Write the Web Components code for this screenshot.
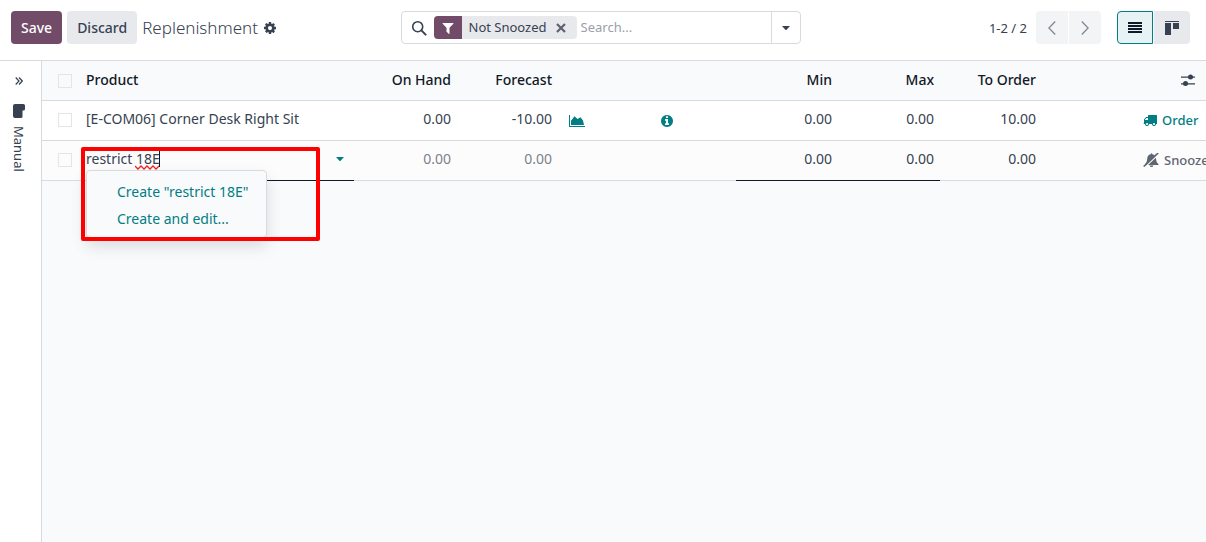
<!DOCTYPE html>
<html lang="en">
<head>
<meta charset="utf-8">
<title>Replenishment</title>
<style>
  html, body { margin: 0; height: 100%; }
  body {
    --brand: #714b67; --teal: #017e84; --line: #d8dadd; --soft: #e7e9ed;
    --ink: #374151; --strong: #111827; --muted: #7c818c; --page: #f9fafb;
    font: 14px/20px "Noto Sans", "Open Sans", sans-serif;
    color: var(--ink); background: var(--page); overflow: hidden;
  }
</style>
</head>
<body>
<replenishment-app></replenishment-app>
<script>
const define = (name, html, setup) => {
  const tpl = document.createElement('template');
  tpl.innerHTML = '<style>*{box-sizing:border-box}button{font:inherit;color:inherit;border:0;background:none;padding:0;margin:0;display:flex;align-items:center;justify-content:center;white-space:nowrap}input{font:inherit;color:inherit}</style>' + html;
  customElements.define(name, class extends HTMLElement {
    constructor() {
      super();
      this.attachShadow({ mode: 'open' }).append(tpl.content.cloneNode(true));
    }
    connectedCallback() { if (setup) setup(this, this.shadowRoot); }
  });
};

const ICONS = {
  cog: [1792, 1792, '<path d="M1152 896q0-106-75-181t-181-75-181 75-75 181 75 181 181 75 181-75 75-181zm512-109v222q0 12-8 23t-20 13l-185 28q-19 54-39 91 35 50 107 138 10 12 10 25t-9 23q-27 37-99 108t-94 71q-12 0-26-9l-138-108q-44 23-91 38-16 136-29 186-7 28-36 28h-222q-14 0-24.5-8.5t-11.5-21.5l-28-184q-49-16-90-37l-141 107q-10 9-25 9-14 0-25-11-126-114-165-168-7-10-7-23 0-12 8-23 15-21 51-66.5t54-70.5q-27-50-41-99l-183-27q-13-2-21-12.5t-8-23.5v-222q0-12 8-23t19-13l186-28q14-46 39-92-40-57-107-138-10-12-10-24 0-10 9-23 26-36 98.5-107.5t94.5-71.5q13 0 26 10l138 107q44-23 91-38 16-136 29-186 7-28 36-28h222q14 0 24.5 8.5t11.5 21.5l28 184q49 16 90 37l142-107q9-9 24-9 13 0 25 10 129 119 165 170 7 8 7 22 0 12-8 23-15 21-51 66.5t-54 70.5q26 50 41 98l183 28q13 2 21 12.5t8 23.5z"/>'],
  filter: [1792, 1792, '<path d="M1595 295q17 41-14 70l-493 493v742q0 42-39 59-13 5-25 5-27 0-45-19l-256-256q-19-19-19-45v-486l-493-493q-31-29-14-70 17-39 59-39h1280q42 0 59 39z"/>'],
  info: [1792, 1792, '<path d="M1152 1376v-160q0-14-9-23t-23-9h-96v-512q0-14-9-23t-23-9h-320q-14 0-23 9t-9 23v160q0 14 9 23t23 9h96v320h-96q-14 0-23 9t-9 23v160q0 14 9 23t23 9h448q14 0 23-9t9-23zm-128-896v-160q0-14-9-23t-23-9h-192q-14 0-23 9t-9 23v160q0 14 9 23t23 9h192q14 0 23-9t9-23zm640 416q0 209-103 385.5t-279.5 279.5-385.5 103-385.5-103-279.5-279.5-103-385.5 103-385.5 279.5-279.5 385.5-103 385.5 103 279.5 279.5 103 385.5z"/>'],
  truck: [1792, 1792, '<path d="M640 1408q0-52-38-90t-90-38-90 38-38 90 38 90 90 38 90-38 38-90zm-384-512h384v-256h-158q-13 0-22 9l-195 195q-9 9-9 22v30zm1280 512q0-52-38-90t-90-38-90 38-38 90 38 90 90 38 90-38 38-90zm256-1088v1024q0 15-4 26.5t-13.5 18.5-16.5 11.5-23.5 6-22.5 2-25.5 0-22.5-.5q0 106-75 181t-181 75-181-75-75-181h-384q0 106-75 181t-181 75-181-75-75-181h-64q-3 0-22.5.5t-25.5 0-22.5-2-23.5-6-16.5-11.5-13.5-18.5-4-26.5q0-26 19-45t45-19v-320q0-8-.5-35t0-38 2.5-34.5 6.5-37 14-30.5 22.5-30l198-198q19-19 50.5-32t58.5-13h160v-192q0-26 19-45t45-19h1024q26 0 45 19t19 45z"/>'],
  search: [16, 16, '<circle cx="6.7" cy="6.7" r="5" fill="none" stroke="currentColor" stroke-width="1.6"/><path d="M10.4 10.4l4.2 4.2" stroke="currentColor" stroke-width="2" stroke-linecap="round"/>'],
  close: [10, 10, '<path d="M1 1l8 8M9 1L1 9" stroke="currentColor" stroke-width="2.2"/>'],
  caret: [8, 4, '<path d="M0 0h8L4.6 3.7q-.6.5-1.2 0z"/>'],
  prev: [8, 14, '<path d="M7.2.6L.9 7l6.3 6.4" fill="none" stroke="currentColor" stroke-width="1.4"/>'],
  next: [8, 14, '<path d="M.8.6L7.1 7 .8 13.4" fill="none" stroke="currentColor" stroke-width="1.4"/>'],
  list: [14, 12, '<path d="M0 0h14v2H0zM0 3h14v2H0zM0 6h14v2H0zM0 9h14v2H0z"/>'],
  kanban: [14, 14, '<path d="M0 0h14v1H0zM0 2h6v12H0zM8 2h6v6H8z"/>'],
  sliders: [14, 12, '<path d="M0 2.5h14v1.200H0zM0 9.300h14v1.200H0z"/><circle cx="9.500" cy="3" r="2.500"/><circle cx="4.500" cy="9.500" r="2.500"/>'],
  expand: [8, 8, '<path d="M.7.5L4 4 .7 7.5M4 .5L7.3 4 4 7.5" fill="none" stroke="currentColor" stroke-width="1.2"/>'],
  folder: [12, 14, '<path d="M2 0h8.400q1.600 0 1.600 1.600V5q0 1.500-1.600 1.500H9.500v5.900q0 1.600-1.600 1.600H2q-2 0-2-2V2q0-2 2-2z"/>'],
  chart: [16, 12, '<path d="M0 0h1v11h15v1H0z"/><path d="M2 10V5.800L5.500 1.300 8.500 4l3-1.700L14 5.500l1 4.500z"/>'],
  bell: [16, 14, '<path d="M8.500.3q.8 0 .8 1 3.700.7 3.700 4.700 0 3.500 2.500 5.200v.8H2v-.8Q4.200 9.500 4.200 6q0-4 3.500-4.700 0-1 .8-1zM6.500 12.500h4q-.4 1.500-2 1.500t-2-1.500z"/><path d="M15.700 1L2 14" stroke="#fcfcfc" stroke-width="1.400"/><path d="M15.200 0L.7 13.500" stroke="currentColor" stroke-width="1.700"/>']
};
define('ui-icon', '<style>:host{display:inline-flex;flex:none}svg{display:block;fill:currentColor}</style>', (el, root) => {
  const [w, h, body] = ICONS[el.getAttribute('name')];
  const width = el.getAttribute('size') || w;
  const height = el.getAttribute('size') || h;
  root.innerHTML += `<svg width="${width}" height="${height}" viewBox="0 0 ${w} ${h}" aria-hidden="true">${body}</svg>`;
});

define('ui-button', `
<style>
  :host{display:inline-flex}
  button{height:33px;padding:0 10px;border-radius:4px;background:var(--soft);font-weight:500}
  :host([primary]) button{background:var(--brand);color:#fff}
</style>
<button type="button"><slot></slot></button>`);

define('search-bar', `
<style>
  :host{display:flex;height:33px;border:1px solid var(--line);border-radius:4px;background:#fff}
  .box{flex:1;min-width:0;display:flex;align-items:center;padding-left:9px}
  .facet{display:flex;align-items:stretch;height:23px;margin:0 4px 0 7px;border-radius:4px;overflow:hidden;background:var(--soft);flex:none}
  .tag{width:28px;display:grid;place-items:center;background:var(--brand);color:#fff}
  .label{padding:0 9px 0 7px;font-size:13px;line-height:23px}
  .facet button{width:10px;margin-right:11px;color:#5b616d}
  input{flex:1;min-width:0;height:24px;border:0;padding:0 0 2px;outline:0;background:none;font-size:13px}
  input::placeholder{color:#9a9fa8;opacity:1}
  .toggle{width:29px;border-left:1px solid var(--line)}
</style>
<div class="box">
  <ui-icon name="search"></ui-icon>
  <div class="facet"><span class="tag"><ui-icon name="filter" size="14"></ui-icon></span><span class="label">Not Snoozed</span><button type="button" aria-label="Remove filter"><ui-icon name="close"></ui-icon></button></div>
  <input type="text" placeholder="Search..." aria-label="Search">
</div>
<button class="toggle" type="button" aria-label="Search options"><ui-icon name="caret"></ui-icon></button>`);

define('record-pager', `
<style>
  :host{display:flex;align-items:center}
  span{margin-right:9px;font-size:13px}
  button{width:32px;height:33px;background:#f3f4f6;color:#858b95}
  .prev{border-radius:4px 0 0 4px;margin-right:1px}.next{border-radius:0 4px 4px 0}
</style>
<span>1-2 / 2</span>
<button class="prev" type="button" aria-label="Previous"><ui-icon name="prev"></ui-icon></button>
<button class="next" type="button" aria-label="Next"><ui-icon name="next"></ui-icon></button>`);

define('view-switcher', `
<style>
  :host{display:flex;gap:1px}
  button{width:36px;height:33px;background:var(--soft);border-radius:0 4px 4px 0}
  .on{background:#e6f2f3;border:1px solid var(--teal);border-radius:4px 0 0 4px;color:var(--strong)}
</style>
<button class="on" type="button" aria-label="List view" aria-pressed="true"><ui-icon name="list"></ui-icon></button>
<button type="button" aria-label="Kanban view"><ui-icon name="kanban"></ui-icon></button>`);

define('control-panel', `
<style>
  :host{display:grid;grid-template-columns:1fr 400px 1fr;align-items:center;padding:11px 16px 16px 11px;background:#fff;border-bottom:1px solid var(--line)}
  .left,.right{display:flex;align-items:center}
  .left{gap:5px}.right{justify-content:flex-end;gap:16px}
  h1{margin:0;font-size:17px;line-height:24px;font-weight:300}
</style>
<div class="left"><ui-button primary>Save</ui-button><ui-button>Discard</ui-button><h1>Replenishment</h1><button type="button" aria-label="Actions"><ui-icon name="cog" size="14"></ui-icon></button></div>
<search-bar></search-bar>
<div class="right"><record-pager></record-pager><view-switcher></view-switcher></div>`);

define('side-panel', `
<style>
  :host{display:flex;flex-direction:column;align-items:center;width:42px;padding:16px 4px 0 0;background:#fff;border-right:1px solid var(--line)}
  .folder{flex-direction:column;gap:8px;margin-top:19px}
  .folder span{writing-mode:vertical-rl;font-size:13px}
</style>
<button type="button" aria-label="Expand panel"><ui-icon name="expand"></ui-icon></button>
<button class="folder" type="button"><ui-icon name="folder"></ui-icon><span>Manual</span></button>`);

define('product-field', `
<style>
  :host{display:block;position:relative}
  .field{display:flex;align-items:center;height:40px;border-bottom:1px solid var(--strong);margin-bottom:-1px;padding:0 10px 3px 0}
  input{flex:1;min-width:0;border:0;padding:0;outline:0;background:none;height:20px}
  .field button{color:var(--teal)}
  .wave{position:absolute;left:49px;top:24px}
  .cursor{position:absolute;left:73px;top:10px;width:1px;height:16px;background:var(--strong)}
  .menu{position:absolute;left:0;top:29px;width:181px;padding:7px 0 0;height:68px;margin:0;list-style:none;background:var(--page);border:1px solid var(--line);border-radius:4px;box-shadow:0 8px 16px rgba(0,0,0,.13)}
  .menu button{height:27px;width:100%;padding-left:30px;justify-content:flex-start;color:var(--teal)}
  .mark{position:absolute;left:-5px;top:6px;width:239px;height:94px;border:4px solid #f00;border-radius:2px;pointer-events:none}
</style>
<div class="field"><input type="text" value="restrict 18E" aria-label="Product" spellcheck="false"><button type="button" aria-label="Open product list"><ui-icon name="caret"></ui-icon></button></div>
<svg class="wave" width="24" height="5" aria-hidden="true"><path d="M0 1l3 3 3-3 3 3 3-3 3 3 3-3 3 3 3-3" fill="none" stroke="#f02020" stroke-width="1.300"/></svg>
<i class="cursor"></i>
<ul class="menu"><li><button type="button">Create "restrict 18E"</button></li><li><button type="button">Create and edit...</button></li></ul>
<div class="mark"></div>`);

define('replenishment-list', `
<style>
  :host{display:block;min-width:0;overflow:hidden}
  table{width:100%;table-layout:fixed;border-collapse:separate;border-spacing:0}
  th,td{height:40px;padding:0 6px 2px;border-bottom:1px solid var(--line);text-align:right;white-space:nowrap;font-weight:400}
  th{color:var(--strong);font-weight:500}
  td{background:#fff;padding-bottom:4px}
  .edit td{background:#fcfcfc}
  .pick{width:38px;padding:0 0 0 16px}
  td.pick{padding-bottom:2px}
  .name,.icon,.act{text-align:left}
  .hand{width:97px}.cast{width:101px}.graph{width:91px}.info{width:87px}.num{width:102px}.space{width:95px}.act{width:69px}
  .icon{padding:0 11px 0 11px}
  input[type=checkbox]{appearance:none;display:block;width:14px;height:14px;margin:0;border:1px solid #e3e5e8;background:transparent}
  td.entry{padding:0 6px;vertical-align:top}
  .muted{color:var(--muted)}
  .line{border-bottom-color:var(--strong)}
  td.act{padding:0 6px 2px}
  td.act button{gap:5px;color:var(--teal);font-size:13px;font-weight:500}
  .edit td.act button{color:#5f6571}
  th.act{padding:0 11px 2px 0}
  th.act button{margin-left:auto;color:var(--ink)}
  .icon button{color:var(--teal)}
</style>
<table>
  <thead><tr>
    <th class="pick"><input type="checkbox" aria-label="Select all"></th>
    <th class="name">Product</th><th class="hand">On Hand</th><th class="cast">Forecast</th><th class="graph"></th><th class="info"></th>
    <th class="num">Min</th><th class="num">Max</th><th class="num">To Order</th><th class="space"></th>
    <th class="act"><button type="button" aria-label="Optional columns"><ui-icon name="sliders"></ui-icon></button></th>
  </tr></thead>
  <tbody>
    <tr>
      <td class="pick"><input type="checkbox" aria-label="Select row"></td>
      <td class="name">[E-COM06] Corner Desk Right Sit</td><td>0.00</td><td>-10.00</td>
      <td class="icon"><button type="button" aria-label="Forecast report"><ui-icon name="chart"></ui-icon></button></td>
      <td class="icon"><button type="button" aria-label="Information"><ui-icon name="info" size="14"></ui-icon></button></td>
      <td>0.00</td><td>0.00</td><td>10.00</td><td></td>
      <td class="act"><button type="button"><ui-icon name="truck" size="14"></ui-icon>Order</button></td>
    </tr>
    <tr class="edit">
      <td class="pick"><input type="checkbox" aria-label="Select row"></td>
      <td class="entry name"><product-field></product-field></td><td class="muted">0.00</td><td class="muted">0.00</td><td></td><td></td>
      <td class="line">0.00</td><td class="line">0.00</td><td>0.00</td><td></td>
      <td class="act"><button type="button"><ui-icon name="bell"></ui-icon>Snooze</button></td>
    </tr>
  </tbody>
</table>`);

define('replenishment-app', `
<style>
  :host{display:flex;flex-direction:column;min-height:100vh}
  main{flex:1;display:grid;grid-template-columns:auto 1fr}
</style>
<control-panel></control-panel>
<main><side-panel></side-panel><replenishment-list></replenishment-list></main>`);
</script>
</body>
</html>
